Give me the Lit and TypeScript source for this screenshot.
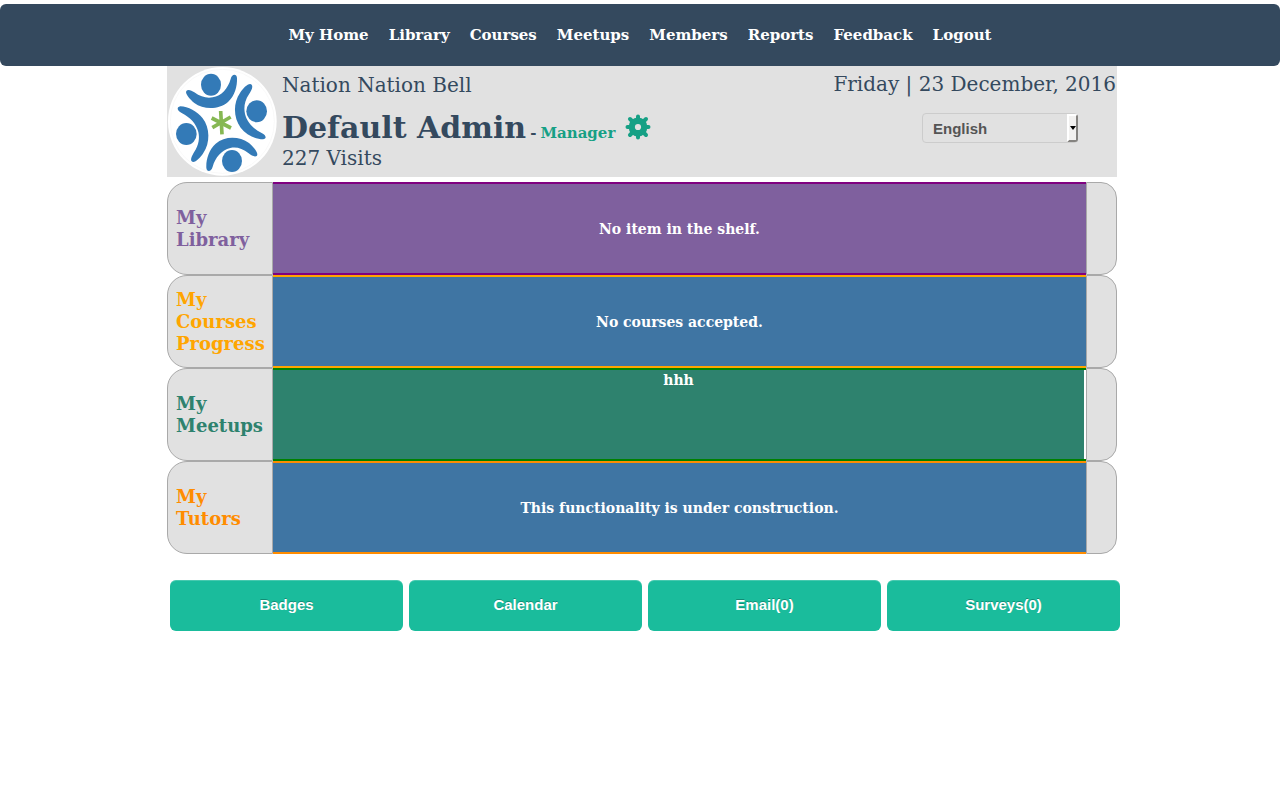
import { LitElement, html, css } from "lit";
import { customElement } from "lit/decorators.js";

const NAV = ["My Home", "Library", "Courses", "Meetups", "Members", "Reports", "Feedback", "Logout"];

const SHELVES = [
  { kind: "library", title: "My Library", text: "No item in the shelf." },
  { kind: "courses", title: "My Courses Progress", text: "No courses accepted." },
  { kind: "meetups", title: "My Meetups", text: "hhh" },
  { kind: "tutors", title: "My Tutors", text: "This functionality is under construction." },
];

const ACTIONS = ["Badges", "Calendar", "Email(0)", "Surveys(0)"];

@customElement("app-root")
export class AppRoot extends LitElement {
  static styles = css`
    :host {
      display: block;
      padding-top: 4px;
      font-family: "DejaVu Serif", serif;
      color: #34495e;
    }
    * {
      box-sizing: border-box;
    }
    .nav {
      display: flex;
      flex-wrap: wrap;
      justify-content: center;
      align-items: center;
      gap: 8px 20px;
      padding: 20px;
      background: #34495e;
      border-radius: 6px;
    }
    .nav a {
      color: #fff;
      font-size: 15px;
      font-weight: bold;
      line-height: 22px;
      text-decoration: none;
    }
    .page {
      max-width: 960px;
      margin: 0 auto;
      padding-left: 7px;
    }
    .head {
      display: flex;
      justify-content: space-between;
      margin-right: 3px;
      background: #e1e1e1;
    }
    .logo {
      display: block;
      flex: none;
      width: 110px;
      height: 111px;
    }
    .who {
      flex: 1;
      padding: 7px 0 0 5px;
      font-size: 20px;
      line-height: 24px;
    }
    .org,
    .visits {
      margin: 0;
    }
    .name {
      display: flex;
      align-items: baseline;
      height: 33px;
      margin: 16px 0 0;
      font-size: 15px;
      line-height: 30px;
    }
    .full {
      font-size: 30px;
      margin-right: 4px;
    }
    .role {
      color: #16a085;
      margin: 0 10px 0 4px;
    }
    .settings {
      align-self: flex-start;
      display: block;
      width: 26px;
      height: 28px;
      padding: 1px 0;
      border: 0;
      background: none;
      cursor: pointer;
    }
    .settings svg {
      display: block;
    }
    .side {
      padding-top: 6px;
      font-size: 20px;
      line-height: 24px;
    }
    .date {
      margin: 0 1px 17px 0;
    }
    .lang {
      display: grid;
      width: 156px;
      height: 30px;
      margin: 0 39px 0 auto;
    }
    .lang select {
      grid-area: 1 / 1;
      appearance: none;
      width: 100%;
      height: 100%;
      padding: 0 20px 0 10px;
      border: 1px solid #ccc;
      border-radius: 4px;
      background: #e1e1e1;
      color: #555;
      font: bold 15px "Liberation Sans", sans-serif;
    }
    .arrow {
      grid-area: 1 / 1;
      justify-self: end;
      display: grid;
      place-items: center;
      width: 11px;
      height: 28px;
      margin: 1px 0 0;
      background: #f2f1f0;
      border: 2px solid;
      border-color: #fff #858380 #858380 #fff;
      border-radius: 0 3px 3px 0;
      pointer-events: none;
    }
    .shelves {
      margin: 5px 3px 0 0;
    }
    .shelf {
      display: grid;
      grid-template-columns: 106px 1fr 31px;
      min-height: 93px;
    }
    .label {
      display: flex;
      align-items: center;
      margin: 0;
      padding: 0 8px;
      background: #e1e1e1;
      border: 1px solid #a9a9a9;
      border-radius: 20px 0 0 20px;
      font-size: 18px;
      line-height: 22px;
    }
    .end {
      background: #e1e1e1;
      border: 1px solid #a9a9a9;
      border-radius: 0 16px 16px 0;
    }
    .body {
      display: flex;
      border: 2px solid;
      border-width: 2px 0;
      color: #fff;
      font-size: 14px;
      font-weight: bold;
      line-height: 20px;
    }
    .item {
      flex: 1;
      display: flex;
      align-items: center;
      justify-content: center;
    }
    .library .label {
      color: #7f609e;
    }
    .library .body {
      border-color: #800080;
    }
    .library .item {
      background: #7f609e;
    }
    .courses .label {
      color: #ffa500;
    }
    .courses .body {
      border-color: #ffa500;
    }
    .courses .item,
    .tutors .item {
      background: #3f75a3;
    }
    .meetups .label {
      color: #2e826e;
    }
    .meetups .body {
      border-color: #008000;
      padding-right: 2px;
    }
    .meetups .item {
      align-items: flex-start;
      background: #2e826e;
    }
    .tutors .label {
      color: #ff8c00;
    }
    .tutors .body {
      border-color: #ff8c00;
    }
    .actions {
      display: grid;
      grid-template-columns: repeat(4, 1fr);
      gap: 6px;
      margin: 26px 0 0 3px;
    }
    .actions button {
      height: 51px;
      padding: 0 0 2px;
      border: 0;
      border-radius: 6px;
      background: #1abc9c;
      box-shadow: inset 0 1px 0 rgba(255, 255, 255, 0.2);
      color: #fff;
      font: bold 15px "Liberation Sans", sans-serif;
      text-shadow: 0 -1px 0 rgba(0, 0, 0, 0.25);
      cursor: pointer;
    }
  `;

  private logo() {
    return html`<svg class="logo" viewBox="21 18 330 333" role="img" aria-label="Nation logo">
      <circle cx="187" cy="184" r="163" fill="#fff" />
      <circle cx="187" cy="184" r="156" fill="none" stroke="#f6f6f6" stroke-width="2" />
      <g fill="#337ab7">
        <ellipse cx="153" cy="74" rx="30" ry="33" />
        <ellipse cx="290" cy="154" rx="31" ry="33" />
        <ellipse cx="216" cy="303" rx="30" ry="33" />
        <ellipse cx="79" cy="222" rx="31" ry="33" />
        <path d="M79 93C83 87 94 90 103 97C122 111 140 115 158 112C185 108 204 85 212 57C216 41 230 41 231 54C232 80 224 108 204 126C176 150 130 149 103 129C91 119 74 101 79 93Z" />
        <path d="M275 74C280 81 274 92 267 103C253 123 251 144 255 162C261 187 279 205 305 219C319 226 321 236 309 238C286 238 258 224 242 203C220 174 219 129 240 99C250 83 267 67 275 74Z" />
        <path d="M291 287C286 292 275 288 266 280C247 265 229 260 211 264C184 270 166 293 158 320C153 337 140 336 139 323C138 297 147 269 167 251C195 227 239 229 267 249C280 260 296 278 291 287Z" />
        <path d="M95 304C90 297 97 286 103 275C117 255 119 234 115 216C109 191 91 173 65 159C51 152 49 141 61 139C84 139 112 154 128 175C150 204 151 249 130 279C120 295 103 311 95 304Z" />
      </g>
      <path
        d="M182 153L186 223M155 174L213 204M212 171L157 203"
        fill="none"
        stroke="#86b853"
        stroke-width="11"
      />
    </svg>`;
  }

  private gear() {
    return html`<svg width="26" height="26" viewBox="0 0 26 26" aria-hidden="true">
      <g stroke="#16a085" stroke-width="4" stroke-linecap="round">
        <path d="M13 2.5V23.5M2.5 13H23.5" />
        <path d="M5 5L21 21M21 5L5 21" />
      </g>
      <circle cx="13" cy="13" r="9.4" fill="#16a085" />
      <circle cx="13" cy="13" r="3.1" fill="#e1e1e1" />
    </svg>`;
  }

  render() {
    return html`
      <nav class="nav">${NAV.map((n) => html`<a href="#">${n}</a>`)}</nav>
      <main class="page">
        <header class="head">
          ${this.logo()}
          <div class="who">
            <p class="org">Nation Nation Bell</p>
            <h1 class="name">
              <span class="full">Default Admin</span><span>-</span><span class="role">Manager</span>
              <button class="settings" aria-label="Settings">${this.gear()}</button>
            </h1>
            <p class="visits">227 Visits</p>
          </div>
          <div class="side">
            <p class="date">Friday | 23 December, 2016</p>
            <div class="lang">
              <select aria-label="Language">
                <option>English</option>
              </select>
              <span class="arrow">
                <svg width="6" height="4" viewBox="0 0 6 4" aria-hidden="true"><path d="M0 0H6L3 4Z" /></svg>
              </span>
            </div>
          </div>
        </header>
        <div class="shelves">
          ${SHELVES.map(
            (s) => html`<section class="shelf ${s.kind}">
              <h2 class="label">${s.title}</h2>
              <div class="body"><div class="item">${s.text}</div></div>
              <div class="end"></div>
            </section>`,
          )}
        </div>
        <div class="actions">${ACTIONS.map((a) => html`<button>${a}</button>`)}</div>
      </main>
    `;
  }
}
